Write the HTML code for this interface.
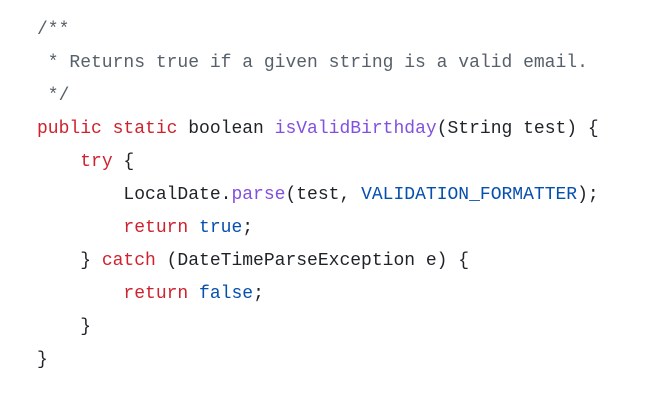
<!DOCTYPE html>
<html><head><style>
html,body{margin:0;padding:0;background:#fff;width:666px;height:401px;overflow:hidden}
pre{margin:0;position:absolute;left:37px;top:14px;font-family:"Liberation Mono",monospace;font-size:18px;line-height:33px;color:#1f2328}
.k{color:#cf222e}.f{color:#8250df}.c{color:#57606a}.b{color:#0550ae}
</style></head><body>
<pre><span class="c">/**
 * Returns true if a given string is a valid email.
 */</span>
<span class="k">public</span> <span class="k">static</span> boolean <span class="f">isValidBirthday</span>(String test) {
    <span class="k">try</span> {
        LocalDate.<span class="f">parse</span>(test, <span class="b">VALIDATION_FORMATTER</span>);
        <span class="k">return</span> <span class="b">true</span>;
    } <span class="k">catch</span> (DateTimeParseException e) {
        <span class="k">return</span> <span class="b">false</span>;
    }
}</pre>
</body></html>
